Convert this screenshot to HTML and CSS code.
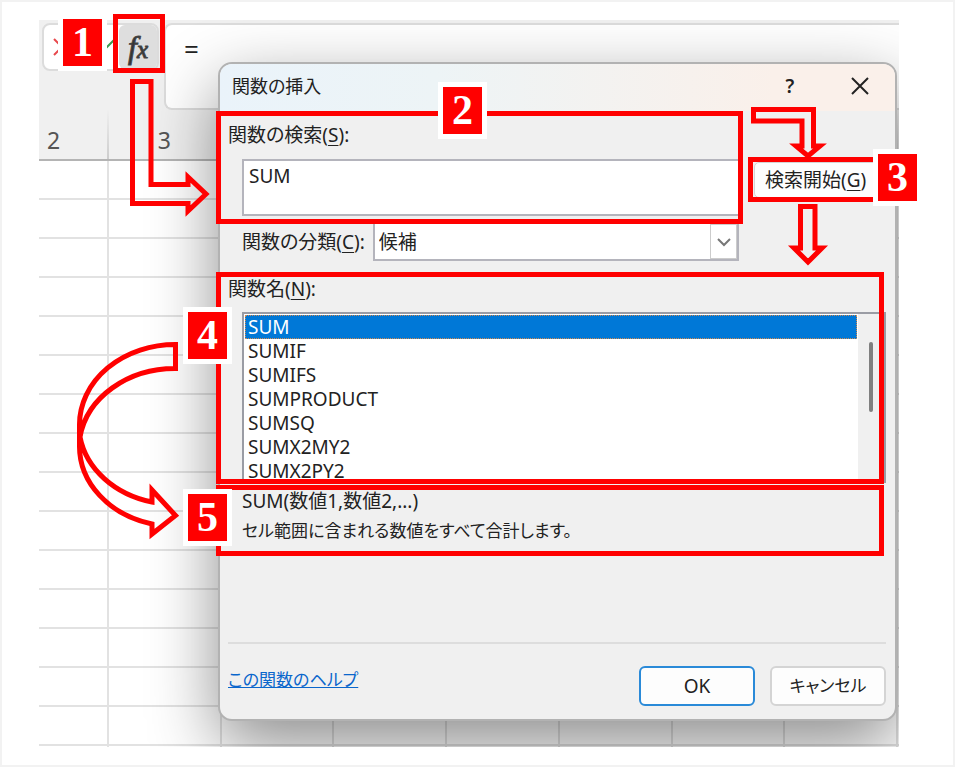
FILE: index.html
```
<!DOCTYPE html>
<html lang="ja">
<head>
  <meta charset="UTF-8" />
  <meta name="viewport" content="width=device-width, initial-scale=1.0" />
  <title>関数の挿入</title>
  <link rel="stylesheet" href="styles.css">
</head>
<body>
  <main class="sheet">
    <div class="formula-row">
      <div class="fx-box">
        <button class="icon-btn" aria-label="キャンセル">
          <svg width="20" height="20" viewBox="0 0 20 20"><path d="M2 2L18 18M18 2L2 18" stroke="#e8484c" /></svg>
        </button>
        <button class="icon-btn" aria-label="入力">
          <svg width="24" height="20" viewBox="0 0 24 20"><path d="M2 9L8 15L20 3" stroke="#3d9a50" /></svg>
        </button>
        <button class="fx-btn" aria-label="関数の挿入">f<small>x</small></button>
      </div>
      <div class="formula">=</div>
    </div>
    <div class="cols col-head">
      <span class="first">2</span><span>3</span><span></span><span></span><span></span><span></span><span></span><span></span>
    </div>
    <div class="cols cells">
      <span></span><span></span><span></span><span></span><span></span><span></span><span></span><span></span>
    </div>

    <form class="dialog" onsubmit="return false">
      <header class="title-bar">
        <h1>関数の挿入</h1>
        <button type="button" class="title-btn" aria-label="ヘルプ">?</button>
        <button type="button" class="title-btn" aria-label="閉じる">
          <svg width="18" height="18" viewBox="0 0 18 18"><path d="M1 1L17 17M17 1L1 17" stroke="#222" /></svg>
        </button>
      </header>

      <div class="dialog-body">
        <label for="search">関数の検索(<u>S</u>):</label>
        <div class="search-row">
          <textarea id="search">SUM</textarea>
          <button type="button" class="go-btn">検索開始(<u>G</u>)</button>
        </div>

        <div class="category-row">
          <label for="category">関数の分類(<u>C</u>):</label>
          <div class="combo">
            <select id="category"><option>候補</option></select>
            <span class="arrow"><svg width="16" height="10" viewBox="0 0 16 10"><path d="M2 2L8 8L14 2" stroke="#777" /></svg></span>
          </div>
        </div>

        <label for="names">関数名(<u>N</u>):</label>
        <div class="list">
          <select id="names" size="7">
            <option selected>SUM</option>
            <option>SUMIF</option>
            <option>SUMIFS</option>
            <option>SUMPRODUCT</option>
            <option>SUMSQ</option>
            <option>SUMX2MY2</option>
            <option>SUMX2PY2</option>
          </select>
          <div class="scroll"><span class="thumb"></span></div>
        </div>

        <div class="description">
          <p>SUM(数値1,数値2,...)</p>
          <p>セル範囲に含まれる数値をすべて合計します。</p>
        </div>

        <footer class="dialog-foot">
          <a href="#">この関数のヘルプ</a>
          <button type="submit" class="btn ok">OK</button>
          <button type="button" class="btn cancel">キャンセル</button>
        </footer>
      </div>
    </form>
  </main>

  <!-- 手順の枠・矢印・番号 -->
  <div class="marks">
    <svg class="arrows" width="955" height="767" viewBox="0 0 955 767">
      <rect x="115.500" y="16.500" width="47" height="54" />
      <rect x="218.500" y="113.500" width="522" height="108" />
      <rect x="750.500" y="159.500" width="140" height="40" />
      <rect x="218.500" y="274.500" width="663" height="207" />
      <rect x="218.500" y="487.500" width="663" height="66" />
      <path d="M132.500 81.500H151V184.500H188V177L206 194L188 211V203.500H132.500Z" />
      <path d="M753.500 109.500H813.500V146H820L808 156L796 146H802V121H753.500Z" />
      <path d="M800.500 206.500H815V248H822L808 262L794 248H800.500Z" />
      <path d="M175.500 344.500A96 80 0 0 0 79.500 424.500V446A96 80 0 0 0 152 524V534L175.500 515.500L152 490V502A96 80 0 0 1 80 437A96 80 0 0 1 175.500 368.500Z" />
    </svg>
    <span class="badge n1">1</span>
    <span class="badge n2">2</span>
    <span class="badge n3">3</span>
    <span class="badge n4">4</span>
    <span class="badge n5">5</span>
  </div>
</body>
</html>
```

FILE: styles.css
```
* {
  box-sizing: border-box;
}
body {
  position: relative;
  margin: 0;
  min-height: 100vh;
  padding: 18px 54px 18px 37px;
  border: 2px solid #f2f2f2;
  background-color: #fff;
  display: flex;
  flex-direction: column;
  font-family: "Noto Sans", "Noto Sans CJK JP", sans-serif;
  font-size: 19px;
  font-feature-settings: "palt";
  line-height: 28px;
  color: #222;
}
button, select, textarea {
  font: inherit;
  font-feature-settings: inherit;
  color: inherit;
  margin: 0;
}
svg {
  fill: none;
  stroke-width: 2;
}
u {
  text-underline-offset: 3px;
}

/* シート */
.sheet {
  position: relative;
  flex: 1;
  display: flex;
  flex-direction: column;
  overflow: hidden;
  background-color: #f0f0f0;
}
.formula-row {
  display: flex;
  align-items: flex-start;
  gap: 5px;
  height: 90px;
  padding: 3px 0 0 3px;
}
.fx-box {
  display: flex;
  align-items: center;
  width: 117px;
  height: 48px;
  padding-left: 8px;
  border: 2px solid #dcdcdc;
  border-radius: 8px;
  background-color: #fff;
}
.icon-btn {
  display: flex;
  width: 33px;
  padding: 0;
  border: 0;
  background: none;
}
.icon-btn + .icon-btn {
  justify-content: flex-end;
  margin-right: -4px;
}
.fx-btn {
  flex: 1;
  height: 44px;
  margin-left: 5px;
  padding: 0;
  border: 0;
  border-radius: 6px;
  background-color: #dedede;
  font: italic 32px "Liberation Serif", serif;
  color: #333;
  -webkit-text-stroke: 1px #444;
}
.fx-btn small {
  font-size: 25px;
}
.formula {
  flex: 1;
  height: 87px;
  padding: 10px 18px;
  border: 2px solid #dcdcdc;
  border-right: 0;
  border-radius: 8px 0 0 8px;
  background-color: #fff;
  font-size: 26px;
}
.cols {
  display: grid;
  grid-template-columns: 70px repeat(7, 1fr);
  padding-right: 1px;
}
.col-head {
  height: 51px;
  border-bottom: 2px solid #b4b4b4;
  font-size: 23px;
  color: #555;
}
.col-head span {
  padding-top: 16px;
  text-align: center;
  border-right: 2px solid;
  border-image: linear-gradient(#f0f0f0, #ccc) 1;
}
.col-head .first {
  padding-left: 8px;
  text-align: left;
}
.cells {
  flex: 1;
  background: repeating-linear-gradient(#fff 0, #fff 37px, #e2e2e2 37px, #e2e2e2 39px);
}
.cells span {
  border-right: 2px solid #e2e2e2;
}

/* ダイアログ */
.dialog {
  position: absolute;
  left: 179px;
  top: 42px;
  width: 679px;
  border: 2px solid #b2b2b2;
  border-radius: 14px;
  background-color: #f0f0f0;
  box-shadow: 0 24px 68px rgba(0, 0, 0, 0.45);
}
.title-bar {
  display: flex;
  align-items: center;
  height: 47px;
  padding: 0 13px 3px 12px;
  border-radius: 12px 12px 0 0;
  background: linear-gradient(90deg, #eaf3fa, #edf4f6 32%, #faf0ea 82%);
}
.title-bar h1 {
  flex: 1;
  margin: 0;
  font-size: 18px;
  font-weight: normal;
}
.title-btn {
  display: flex;
  align-items: center;
  justify-content: center;
  width: 44px;
  height: 40px;
  margin-left: 26px;
  padding: 0;
  border: 0;
  background: none;
  font-weight: 600;
}
.dialog-body {
  padding: 10px 9px 13px 8px;
}
.dialog-body label {
  display: block;
}
.search-row {
  display: flex;
  align-items: center;
  gap: 14px;
  margin: 10px 0 6px 14px;
}
.search-row textarea {
  width: 498px;
  height: 57px;
  padding: 1px 5px;
  border: 2px solid #b4b4bc;
  background-color: #fff;
  resize: none;
  overflow: hidden;
}
.go-btn {
  flex: 1;
  height: 36px;
  margin-bottom: 16px;
  padding: 0 0 0 10px;
  border: 1px solid #d4d4d4;
  border-radius: 5px;
  background-color: #fdfdfd;
  text-align: left;
}
.category-row {
  display: flex;
  align-items: center;
  width: 511px;
  padding-left: 14px;
  gap: 8px;
}
.combo {
  position: relative;
  flex: 1;
}
.combo select {
  display: block;
  width: 100%;
  height: 39px;
  padding: 0 4px;
  border: 2px solid #b4b4bc;
  border-radius: 0;
  background-color: #fff;
  appearance: none;
}
.arrow {
  position: absolute;
  right: 2px;
  top: 2px;
  bottom: 2px;
  width: 27px;
  display: flex;
  align-items: center;
  justify-content: center;
  border: 1px solid #ccc;
  background-color: #fff;
  pointer-events: none;
}
.category-row + label {
  margin-top: 14px;
}
.list {
  display: flex;
  height: 171px;
  margin: 9px 0 4px 14px;
  border: 2px solid #9a9ca4;
  background-color: #fff;
}
.list select {
  flex: 1;
  height: 167px;
  padding: 1px;
  border: 0;
  outline: 0;
  background-color: #fff;
  overflow: hidden;
}
.list option {
  display: flex;
  align-items: center;
  height: 24px;
  min-height: 24px;
  padding: 0 3px;
}
.list option:checked {
  background: #0078d7 linear-gradient(#0078d7, #0078d7);
  color: #fff;
  outline: 1px dotted #d08a50;
  outline-offset: -1px;
}
.scroll {
  width: 26px;
  padding: 28px 0 0 11px;
  background-color: #f0f0f0;
}
.thumb {
  display: block;
  width: 4px;
  height: 70px;
  border-radius: 2px;
  background-color: #808080;
}
.description {
  height: 155px;
  margin-left: 14px;
}
.description p {
  margin: 0 0 2px;
}
.description p + p {
  font-size: 17px;
}
.dialog-foot {
  display: flex;
  align-items: flex-start;
  gap: 15px;
  padding-top: 22px;
  border-top: 2px solid #ddd;
}
.dialog-foot a {
  margin-right: auto;
  font-size: 17px;
  color: #0a66cc;
}
.btn {
  width: 116px;
  height: 40px;
  padding: 0;
  border: 2px solid #d4d4d4;
  border-radius: 6px;
  background-color: #fdfdfd;
}
.btn.ok {
  border-color: #2a8ad8;
}
.btn.cancel {
  font-size: 17px;
}

/* 手順の目印 */
.marks {
  position: absolute;
  left: -2px;
  top: -2px;
  pointer-events: none;
}
.arrows {
  display: block;
  stroke: #f00;
  stroke-width: 5;
}
.badge {
  position: absolute;
  width: 49px;
  height: 57px;
  border: 5px solid #fff;
  background-color: #f00;
  color: #fff;
  font: bold 42px/46px "Liberation Serif", serif;
  text-align: center;
}
.n1 {
  left: 58px;
  top: 14px;
}
.n2 {
  left: 438px;
  top: 82px;
}
.n3 {
  left: 873px;
  top: 149px;
}
.n4 {
  left: 183px;
  top: 307px;
}
.n5 {
  left: 183px;
  top: 489px;
}
```
